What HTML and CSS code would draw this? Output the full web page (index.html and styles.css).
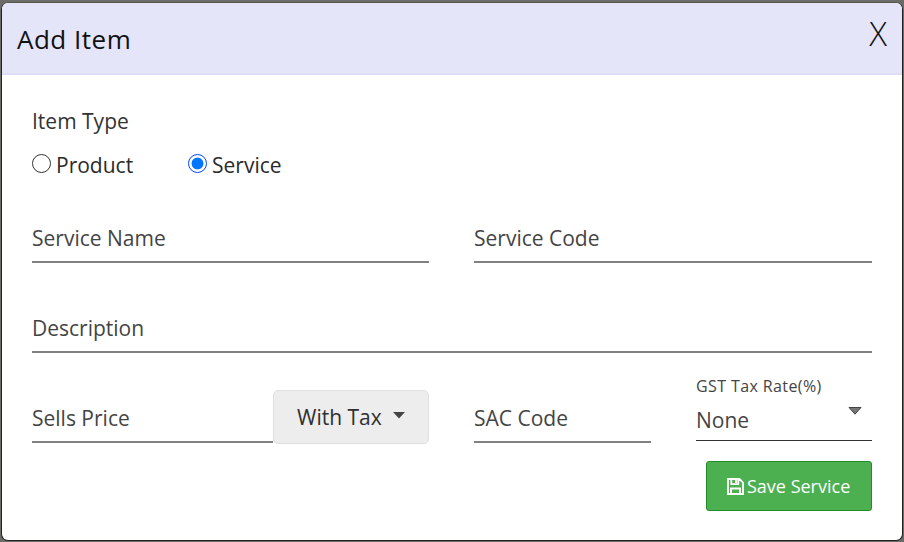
FILE: index.html
```html
<!DOCTYPE html>
<html lang="en">
<head>
<meta charset="utf-8">
<title>Add Item</title>
<link rel="stylesheet" href="styles.css">
</head>
<body>
<main class="dialog">
  <header class="header">
    <h1 class="title"><span>Add Item</span></h1>
    <button class="close">X</button>
  </header>
  <form class="body">
    <div class="type-label"><span>Item Type</span></div>
    <div class="radios">
      <label class="radio product"><i class="dot"></i><span>Product</span></label>
      <label class="radio service"><i class="dot checked"></i><span>Service</span></label>
    </div>
    <div class="row first">
      <div class="field"><span class="name">Service Name</span></div>
      <div class="field"><span class="code">Service Code</span></div>
    </div>
    <div class="row second">
      <div class="field"><span class="desc">Description</span></div>
    </div>
    <div class="row third">
      <div class="price">
        <div class="field"><span>Sells Price</span></div>
        <button type="button" class="tax"><span>With Tax</span><svg width="12" height="7" viewBox="0 0 12 7"><path d="M0 0h12L6 6.5z" fill="#444"/></svg></button>
      </div>
      <div class="codes">
        <div class="field sac"><span>SAC Code</span></div>
        <div class="rate">
          <span class="rate-label">GST Tax Rate(%)</span>
          <div class="select"><span>None</span><svg width="14" height="8" viewBox="0 0 14 8"><path d="M1 .5h12L7 7.2z" fill="#777" stroke="#444"/></svg></div>
        </div>
      </div>
    </div>
    <div class="actions">
      <button type="button" class="save"><svg width="17" height="17" viewBox="0 0 17 17" fill="none" stroke="#fff" stroke-width="1.8"><path d="M1 1h11.5L16 4.5V16H1zM4.3 1v5.2h7V1M4 16v-5.5h9V16"/><path d="M9 2v3" stroke-width="2"/></svg><span>Save Service</span></button>
    </div>
  </form>
</main>
</body>
</html>
```
FILE: styles.css
```css
* { box-sizing: border-box; }
body {
  margin: 0;
  height: 542px;
  padding: 2px 1px 1px;
  overflow: hidden;
  background: #6b6b68;
  font-family: "Open Sans", sans-serif;
  font-size: 21px;
  font-weight: 400;
  color: #444;
}
button { font: inherit; color: inherit; border: 0; padding: 0; background: none; }
svg { display: block; flex: none; }
span { white-space: nowrap; }
.dialog {
  height: 539px;
  border: 1px solid #222;
  border-top-color: #55554a;
  border-radius: 7px;
  background: #fff;
  overflow: hidden;
}
.header {
  height: 72px;
  display: flex;
  justify-content: space-between;
  padding: 0 15px;
  background: #e5e5fa;
  border-bottom: 2px solid #dedcf7;
}
.title { margin: 0; font-size: 26px; line-height: 72px; font-weight: 400; letter-spacing: 0.5px; color: #111; }
.close { font-size: 33px; font-weight: 300; line-height: 62px; height: 62px; color: #111; }
.body { padding: 0 30px; }
.type-label { height: 30px; margin-top: 31px; line-height: 30px; color: #333; }
.radios { display: flex; height: 30px; margin-top: 14px; }
.radio { display: flex; line-height: 30px; color: #2a2a2a; }
.product { width: 156px; }
.dot {
  width: 19px;
  height: 19px;
  margin: 4px 5px 0 0;
  border: 1.5px solid #333;
  border-radius: 50%;
}
.checked { border: 1.5px solid #0045ff; background: radial-gradient(circle, #0075ff 5.5px, #fff 6.3px); }
.row { display: flex; gap: 45px; }
.first, .third { display: grid; grid-template-columns: 397px 398px; }
.first { margin-top: 42px; }
.field { flex: 1; height: 41px; line-height: 32px; border-bottom: 2px solid #818181; }
.second { margin-top: 49px; }
.third { margin-top: 31px; }
.price, .codes { display: flex; }
.price .field, .codes .sac { margin-top: 18px; }
.codes { gap: 45px; }
.tax {
  width: 156px;
  height: 54px;
  margin-top: 6px;
  margin-bottom: 7px;
  display: flex;
  align-items: center;
  padding-left: 23px;
  gap: 11px;
  background: #ededed;
  border: 1px solid #dfdfdf;
  border-radius: 5px;
  color: #2f2f2f;
}
.tax svg { margin-bottom: 4px; }
.rate { flex: 0 0 176px; height: 66px; margin-top: -9px; border-bottom: 1px solid #333; }
.rate-label { display: block; height: 28px; font-size: 16px; line-height: 22px; letter-spacing: 0.4px; }
.select { display: flex; justify-content: space-between; padding-right: 10px; line-height: 34px; }
.select svg { margin-top: 4px; }
.actions { display: flex; justify-content: flex-end; margin-top: 10px; }
.save {
  width: 166px;
  height: 50px;
  display: flex;
  align-items: center;
  padding-left: 20px;
  gap: 3px;
  background: #4caf50;
  border: 1px solid #238b27;
  border-radius: 3px;
  color: #fff;
  font-size: 18px;
}
```
